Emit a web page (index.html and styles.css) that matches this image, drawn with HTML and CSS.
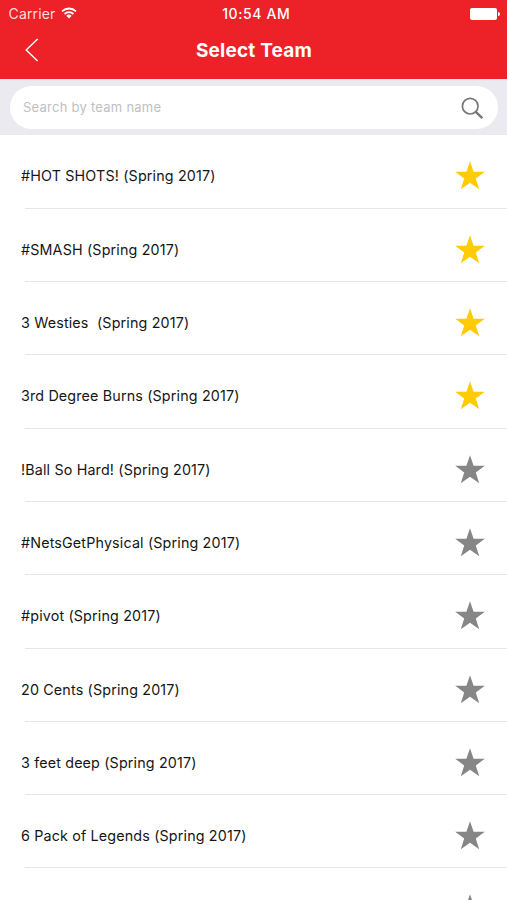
FILE: index.html
```html
<!DOCTYPE html>
<html lang="en">
<head>
<meta charset="utf-8">
<title>Select Team</title>
<link rel="stylesheet" href="styles.css">
</head>
<body>
<svg width="0" height="0" class="defs" aria-hidden="true">
  <symbol id="star" viewBox="0 0 30 29"><path d="M15 0.3 18.6 10.8H29.8L20.8 17.4 24.2 28.3 15 21.7 5.8 28.3 9.2 17.4 0.2 10.8H11.4Z"/></symbol>
</svg>
<header class="header">
  <div class="status">
    <div class="carrier"><span class="carrier-name">Carrier</span>
      <svg class="wifi" width="16" height="12" viewBox="0 0 16 12"><g fill="none" stroke="#fff" stroke-width="1.8"><path d="M1 4.3a10.2 10.2 0 0 1 14 0"/><path d="M3.5 7a6.5 6.5 0 0 1 9 0"/></g><path d="M8 11.4 5.3 8.8a4 4 0 0 1 5.4 0z" fill="#fff"/></svg>
    </div>
    <span class="time">10:54 AM</span>
    <div class="battery"><span class="cell"></span><span class="tip"></span></div>
  </div>
  <nav class="nav">
    <svg class="back" width="14" height="24" viewBox="0 0 14 24"><path d="M12.6 1 1.2 12 12.6 23" fill="none" stroke="#fff" stroke-width="1.4"/></svg>
    <h1 class="title">Select Team</h1>
  </nav>
</header>
<div class="search">
  <div class="field">
    <span class="placeholder">Search by team name</span>
    <svg class="lens" width="23" height="23" viewBox="0 0 23 23" fill="none" stroke="#777"><circle cx="9.2" cy="9.2" r="7.8" stroke-width="1.7"/><path d="M14.8 14.8 21.3 21.2" stroke-width="2.4"/></svg>
  </div>
</div>
<main class="list">
  <div class="row"><span class="name">#HOT SHOTS! (Spring 2017)</span><svg class="star on"><use href="#star"/></svg></div>
  <div class="row"><span class="name">#SMASH (Spring 2017)</span><svg class="star on"><use href="#star"/></svg></div>
  <div class="row"><span class="name">3 Westies  (Spring 2017)</span><svg class="star on"><use href="#star"/></svg></div>
  <div class="row"><span class="name">3rd Degree Burns (Spring 2017)</span><svg class="star on"><use href="#star"/></svg></div>
  <div class="row"><span class="name">!Ball So Hard! (Spring 2017)</span><svg class="star"><use href="#star"/></svg></div>
  <div class="row"><span class="name">#NetsGetPhysical (Spring 2017)</span><svg class="star"><use href="#star"/></svg></div>
  <div class="row"><span class="name">#pivot (Spring 2017)</span><svg class="star"><use href="#star"/></svg></div>
  <div class="row"><span class="name">20 Cents (Spring 2017)</span><svg class="star"><use href="#star"/></svg></div>
  <div class="row"><span class="name">3 feet deep (Spring 2017)</span><svg class="star"><use href="#star"/></svg></div>
  <div class="row"><span class="name">6 Pack of Legends (Spring 2017)</span><svg class="star"><use href="#star"/></svg></div>
  <div class="row"><span class="name"></span><svg class="star"><use href="#star"/></svg></div>
</main>
</body>
</html>
```
FILE: styles.css
```css
* { box-sizing: border-box; }
body {
  margin: 0;
  height: 900px;
  overflow: hidden;
  display: flex;
  flex-direction: column;
  background: #fff;
  color: #161616;
  font-family: Inter, "Liberation Sans", sans-serif;
}
.defs { position: absolute; }
.header {
  flex: none;
  height: 79px;
  background: #ed2228;
  color: #fff;
}
.status {
  height: 27px;
  padding: 0 7px 0 8.5px;
  display: grid;
  grid-template-columns: 1fr auto 1fr;
  align-items: center;
  font-size: 14px;
}
.carrier { display: flex; align-items: center; gap: 6px; }
.carrier-name { letter-spacing: 0.15px; color: #ffdcdc; }
.wifi { margin-bottom: 1px; }
.time { margin-left: 4px; font-weight: 500; letter-spacing: 0.6px; }
.battery { display: flex; align-items: center; justify-content: flex-end; gap: 1px; }
.cell { width: 27px; height: 12px; border-radius: 2px; background: #fff; }
.tip { width: 2px; height: 4px; border-radius: 0 2px 2px 0; background: #fff; }
.nav {
  height: 46px;
  padding: 0 24px 0 25px;
  display: grid;
  grid-template-columns: 1fr auto 1fr;
  align-items: center;
}
.title { margin: 0; font-size: 19px; font-weight: 700; letter-spacing: 0.2px; }
.search {
  flex: none;
  height: 56px;
  padding: 7px 9px 6px 10px;
  background: #ebeaf1;
}
.field {
  height: 43px;
  padding: 0 14px 0 13px;
  border-radius: 21.5px;
  background: #fff;
  display: flex;
  align-items: center;
  justify-content: space-between;
}
.placeholder { margin-bottom: 2px; font-size: 13px; color: #bfbfbf; letter-spacing: 0.25px; }
.lens { margin-top: 1px; }
.list { flex: none; padding-top: 0.5px; }
.row {
  height: 73.3px;
  margin-left: 25px;
  padding: 8.6px 22px 0 0;
  border-bottom: 1px solid #e6e6e6;
  display: flex;
  align-items: center;
  justify-content: space-between;
}
.name { margin-left: -4px; font-size: 14.3px; letter-spacing: 0.16px; white-space: pre; }
.star { width: 30px; height: 29px; fill: #868686; }
.star.on { fill: #ffcb05; }
```
